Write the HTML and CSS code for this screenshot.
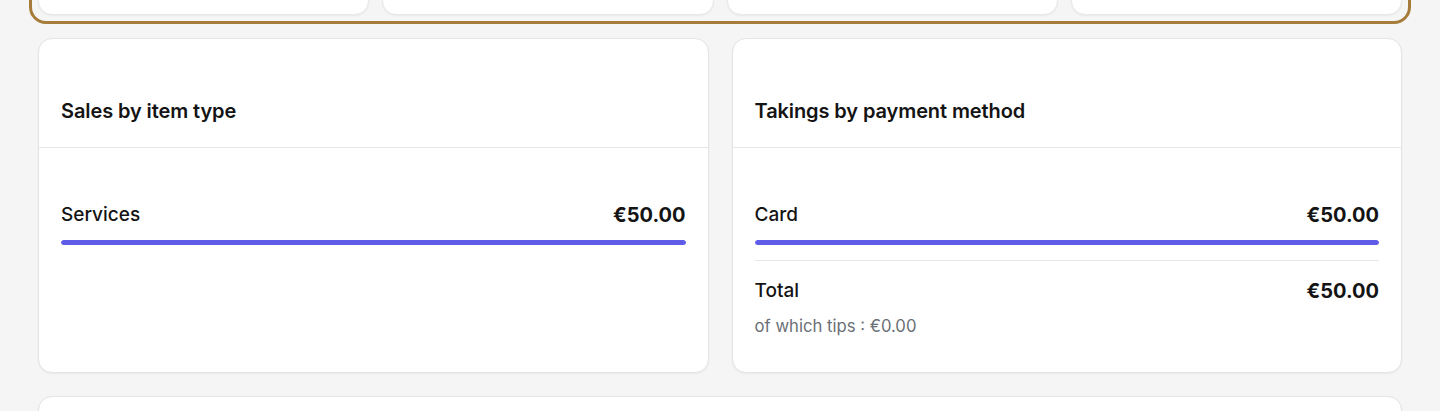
FILE: index.html
```html
<!DOCTYPE html>
<html lang="en">
<head>
<meta charset="utf-8">
<title>Reports</title>
<link rel="stylesheet" href="styles.css">
</head>
<body>
<main class="page">
  <section class="highlight">
    <div class="stat-grid">
      <div class="stat-card"></div>
      <div class="stat-card"></div>
      <div class="stat-card"></div>
      <div class="stat-card"></div>
    </div>
  </section>

  <section class="two-col">
    <article class="card">
      <header class="card-head"><h2>Sales by item type</h2></header>
      <div class="card-body">
        <div class="row"><span class="label">Services</span><span class="amount">€50.00</span></div>
        <div class="bar"><div class="bar-fill" style="width:100%"></div></div>
      </div>
    </article>

    <article class="card">
      <header class="card-head"><h2>Takings by payment method</h2></header>
      <div class="card-body">
        <div class="row"><span class="label">Card</span><span class="amount">€50.00</span></div>
        <div class="bar"><div class="bar-fill" style="width:100%"></div></div>
        <div class="divider"></div>
        <div class="row total"><span class="label">Total</span><span class="amount">€50.00</span></div>
        <p class="tips">of which tips : €0.00</p>
      </div>
    </article>
  </section>

  <section class="card bottom-card"></section>
</main>
</body>
</html>
```

FILE: styles.css
```css
* { box-sizing: border-box; }

html, body {
  margin: 0;
  padding: 0;
  background: #f5f5f5;
  font-family: Inter, "Noto Sans", "Liberation Sans", sans-serif;
  color: #141414;
  overflow: hidden;
}

.page {
  padding: 0 38px;
  display: flex;
  flex-direction: column;
  gap: 23px;
}

.highlight {
  margin: -94px -9px -9px;
  border: 3px solid #a57c3a;
  border-radius: 17px;
  padding: 6px;
}

.stat-grid {
  display: grid;
  grid-template-columns: repeat(4, 1fr);
  gap: 13px;
}

.stat-card {
  height: 100px;
  background: #fff;
  border: 1px solid #e8e8e8;
  border-radius: 14px;
  box-shadow: 0 1px 2px rgba(0,0,0,0.05);
}

.two-col {
  display: grid;
  grid-template-columns: 1fr 1fr;
  gap: 23px;
}

.card {
  background: #fff;
  border: 1px solid #e4e4e4;
  border-radius: 14px;
  box-shadow: 0 1px 2px rgba(0,0,0,0.05);
}

.card-head {
  padding: 60px 22px 24px;
  border-bottom: 1px solid #e6e6e6;
}

.card-head h2 {
  margin: 0;
  font-size: 20px;
  line-height: 24px;
  font-weight: 600;
  letter-spacing: -0.1px;
}

.card-body {
  padding: 55px 22px 36px;
}

.row {
  display: flex;
  justify-content: space-between;
  align-items: center;
  line-height: 24px;
}

.label {
  font-size: 19px;
  font-weight: 500;
}

.amount {
  font-size: 20px;
  font-weight: 700;
}

.bar {
  margin-top: 13px;
  height: 5px;
  border-radius: 3px;
  background: #ececf5;
  overflow: hidden;
}

.bar-fill {
  height: 100%;
  background: #5f5de8;
  border-radius: 3px;
}

.divider {
  margin-top: 15px;
  height: 1px;
  background: #e6e6e6;
}

.total {
  margin-top: 18px;
}

.tips {
  margin: 13px 0 0;
  font-size: 16.7px;
  line-height: 20px;
  color: #6b6f76;
}

.bottom-card {
  height: 120px;
}
```
